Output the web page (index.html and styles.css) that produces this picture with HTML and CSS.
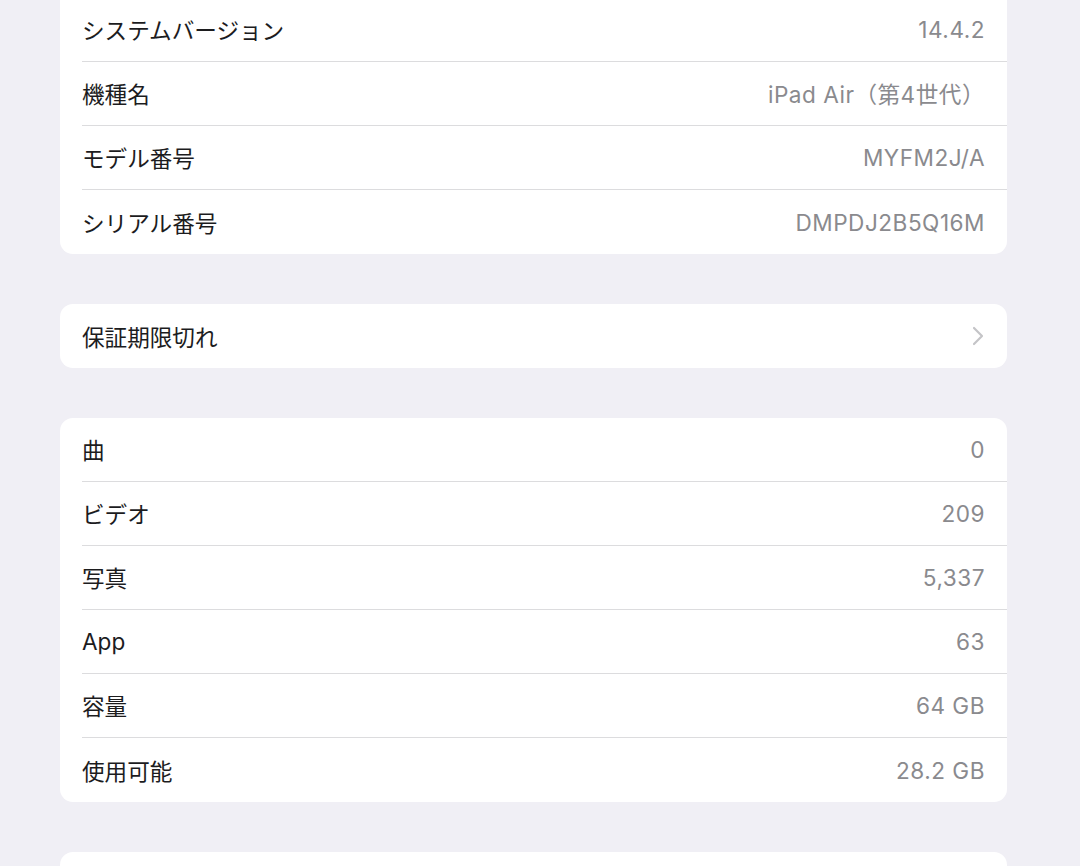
FILE: index.html
```html
<!DOCTYPE html>
<html lang="ja">
<head>
    <meta charset="UTF-8">
    <meta name="viewport" content="width=device-width, initial-scale=1.0">
    <title>情報</title>
    <link rel="stylesheet" href="styles.css">
</head>
<body>
    <div class="group group-cut">
        <div class="row"><span class="label">システムバージョン</span><span class="value">14.4.2</span></div>
        <div class="row"><span class="label">機種名</span><span class="value">iPad Air（第4世代）</span></div>
        <div class="row"><span class="label">モデル番号</span><span class="value">MYFM2J/A</span></div>
        <div class="row"><span class="label">シリアル番号</span><span class="value">DMPDJ2B5Q16M</span></div>
    </div>

    <div class="group">
        <div class="row">
            <span class="label">保証期限切れ</span>
            <svg class="chevron" width="12" height="20" viewBox="0 0 12 20">
                <polyline points="2,2 10,10 2,18" fill="none" stroke="#c4c4c7" stroke-width="2.2" stroke-linecap="round" stroke-linejoin="round"/>
            </svg>
        </div>
    </div>

    <div class="group">
        <div class="row"><span class="label">曲</span><span class="value">0</span></div>
        <div class="row"><span class="label">ビデオ</span><span class="value">209</span></div>
        <div class="row"><span class="label">写真</span><span class="value">5,337</span></div>
        <div class="row"><span class="label">App</span><span class="value">63</span></div>
        <div class="row"><span class="label">容量</span><span class="value">64 GB</span></div>
        <div class="row"><span class="label">使用可能</span><span class="value">28.2 GB</span></div>
    </div>

    <div class="group">
        <div class="row"></div>
    </div>
</body>
</html>
```

FILE: styles.css
```css
body {
    margin: 0;
    padding: 0 73px 0 60px;
    background-color: #f0eff5;
    font-family: Inter, "Noto Sans CJK JP", sans-serif;
    font-size: 22.6px;
    color: #1c1c1e;
    overflow: hidden;
    height: 866px;
}
.group {
    background-color: #fff;
    border-radius: 13px;
    margin-bottom: 50px;
    overflow: hidden;
}
.group-cut {
    margin-top: -2px;
    border-top-left-radius: 0;
    border-top-right-radius: 0;
}
.row {
    display: flex;
    align-items: center;
    justify-content: space-between;
    height: 64px;
    margin-left: 22px;
    padding-right: 22px;
    box-sizing: border-box;
    border-bottom: 1px solid #dcdcde;
}
.row:last-child {
    border-bottom: none;
}
.value {
    color: #8a8a8e;
    letter-spacing: 0.5px;
}
.chevron {
    margin-right: 1px;
}
```
